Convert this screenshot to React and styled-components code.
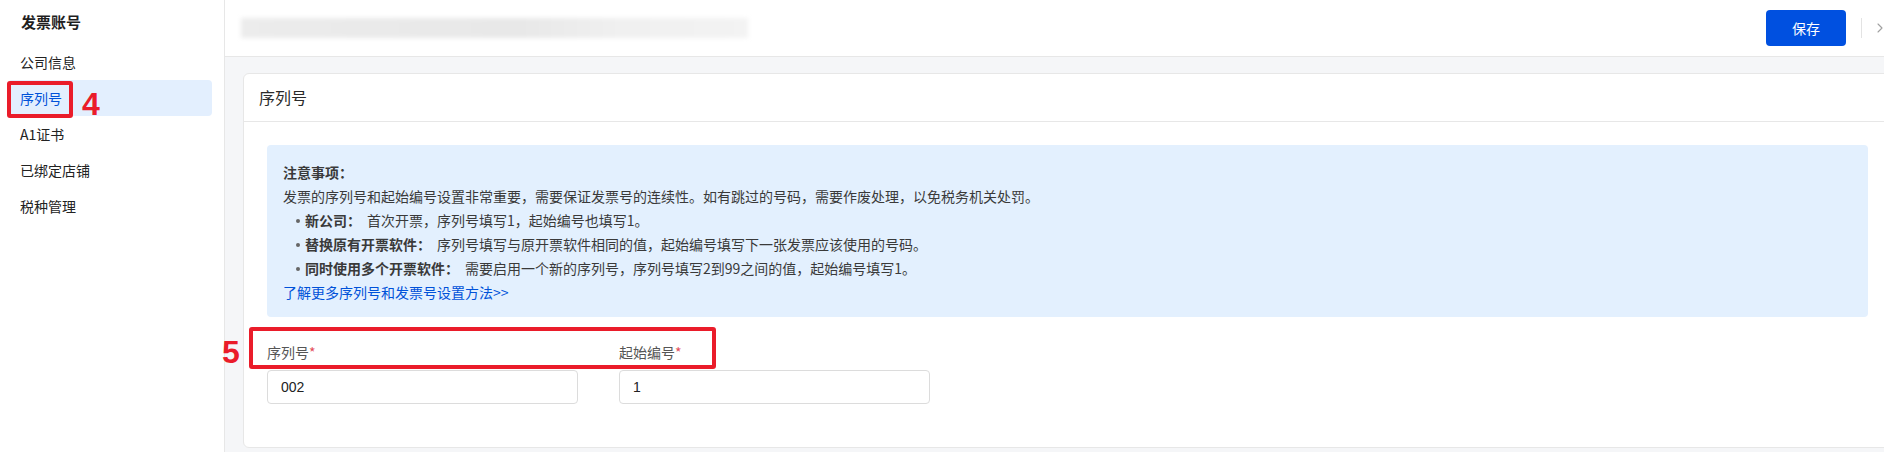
import styled, { createGlobalStyle } from 'styled-components'
import { ChevronRight } from 'lucide-react'

const GlobalStyle = createGlobalStyle`
  html, body {
    margin: 0;
    padding: 0;
    overflow: hidden;
    background: #ffffff;
  }
  body {
    font-family: "Noto Sans CJK SC", "Microsoft YaHei", sans-serif;
    color: #333;
  }
  * { box-sizing: border-box; }
`

const menuItems = ['公司信息', '序列号', 'A1证书', '已绑定店铺', '税种管理']

const tips = [
  { title: '新公司：', text: '首次开票，序列号填写1，起始编号也填写1。' },
  { title: '替换原有开票软件：', text: '序列号填写与原开票软件相同的值，起始编号填写下一张发票应该使用的号码。' },
  { title: '同时使用多个开票软件：', text: '需要启用一个新的序列号，序列号填写2到99之间的值，起始编号填写1。' },
]

function App() {
  return (
    <Page>
      <GlobalStyle />
      <Sidebar>
        <SideTitle>发票账号</SideTitle>
        <Menu>
          {menuItems.map((item) => (
            <MenuItem key={item} active={item === '序列号'}>{item}</MenuItem>
          ))}
        </Menu>
      </Sidebar>

      <Main>
        <TopBar>
          <BlurredTitle />
          <SaveButton>保存</SaveButton>
          <Divider />
          <ChevronRight size={16} color="#a0a0a0" strokeWidth={1.6} />
        </TopBar>

        <Content>
          <Card>
            <CardHeader>序列号</CardHeader>
            <CardBody>
              <Notice>
                <NoticeTitle>注意事项：</NoticeTitle>
                <div>发票的序列号和起始编号设置非常重要，需要保证发票号的连续性。如有跳过的号码，需要作废处理，以免税务机关处罚。</div>
                <TipList>
                  {tips.map((tip) => (
                    <Tip key={tip.title}>
                      <strong>{tip.title}</strong>
                      <span>{tip.text}</span>
                    </Tip>
                  ))}
                </TipList>
                <MoreLink href="#">了解更多序列号和发票号设置方法&gt;&gt;</MoreLink>
              </Notice>

              <FormRow>
                <Field>
                  <Label>序列号<Star>*</Star></Label>
                  <Input defaultValue="002" />
                </Field>
                <Field>
                  <Label>起始编号<Star>*</Star></Label>
                  <Input defaultValue="1" />
                </Field>
              </FormRow>
            </CardBody>
          </Card>
        </Content>
      </Main>

      {/* red annotation marks drawn over the screenshot */}
      <MarkBox style={{ left: 7, top: 81, width: 66, height: 37 }} />
      <MarkNumber style={{ left: 82, top: 88 }}>4</MarkNumber>
      <MarkBox style={{ left: 249, top: 327, width: 467, height: 42 }} />
      <MarkNumber style={{ left: 222, top: 336 }}>5</MarkNumber>
    </Page>
  )
}
export default App

const Page = styled.div`
  position: relative;
  display: flex;
  width: 1908px;
  height: 452px;
`

const Sidebar = styled.aside`
  width: 225px;
  flex-shrink: 0;
  border-right: 1px solid #e7e7e7;
  background: #fff;
  padding: 10px 12px 0 8px;
`

const SideTitle = styled.div`
  font-size: 15px;
  font-weight: bold;
  line-height: 24px;
  color: #1f1f1f;
  padding-left: 13px;
`

const Menu = styled.ul`
  list-style: none;
  margin: 10px 0 0;
  padding: 0;
`

const MenuItem = styled.li`
  height: 36px;
  line-height: 36px;
  padding-left: 12px;
  font-size: 14px;
  border-radius: 4px;
  color: ${(props) => (props.active ? '#0052d9' : '#222')};
  background: ${(props) => (props.active ? '#e3effe' : 'transparent')};
`

const Main = styled.main`
  flex: 1;
  display: flex;
  flex-direction: column;
  background: #f5f6f8;
`

const TopBar = styled.header`
  height: 57px;
  display: flex;
  align-items: center;
  padding: 0 20px 0 16px;
  background: #fff;
  border-bottom: 1px solid #e7e7e7;
`

const BlurredTitle = styled.div`
  width: 507px;
  height: 20px;
  margin-top: -1px;
  background: linear-gradient(90deg, #ececec 0%, #e8e8e8 55%, #f0f0f0 75%, #f3f3f3 100%);
  filter: blur(2px);
`

const SaveButton = styled.button`
  margin-left: auto;
  width: 80px;
  height: 36px;
  border: none;
  border-radius: 4px;
  background: #0050e0;
  color: #fff;
  font-family: inherit;
  font-size: 14px;
  cursor: pointer;
`

const Divider = styled.span`
  width: 1px;
  height: 20px;
  background: #e3e3e3;
  margin: 0 10px 0 15px;
`

const Content = styled.section`
  flex: 1;
  padding: 16px 16px 0 18px;
`

const Card = styled.div`
  background: #fff;
  border: 1px solid #e7e7e7;
  border-radius: 6px;
`

const CardHeader = styled.div`
  height: 48px;
  line-height: 47px;
  padding-left: 15px;
  font-size: 16px;
  color: #2a2a2a;
  border-bottom: 1px solid #e7e7e7;
`

const CardBody = styled.div`
  padding: 23px 23px 43px 23px;
`

const Notice = styled.div`
  background: #e3f0fe;
  border-radius: 4px;
  padding: 15px 16px 13px;
  font-size: 14px;
  line-height: 24px;
  color: #3a3a3a;
`

const NoticeTitle = styled.div`
  font-weight: bold;
`

const TipList = styled.ul`
  margin: 0;
  padding: 0 0 0 22px;
  list-style: none;
`

const Tip = styled.li`
  position: relative;

  &::before {
    content: '';
    position: absolute;
    left: -9px;
    top: 11px;
    width: 4px;
    height: 4px;
    border-radius: 50%;
    background: #666;
  }

  strong {
    margin-right: 6px;
  }
`

const MoreLink = styled.a`
  color: #0052d9;
  text-decoration: none;
`

const FormRow = styled.div`
  display: flex;
  gap: 41px;
  margin-top: 24px;
`

const Field = styled.div`
  display: flex;
  flex-direction: column;
  width: 311px;
`

const Label = styled.label`
  font-size: 14px;
  line-height: 22px;
  color: #555;
  margin-bottom: 7px;
`

const Star = styled.span`
  color: #e34d59;
`

const Input = styled.input`
  height: 34px;
  border: 1px solid #dcdcdc;
  border-radius: 4px;
  padding: 0 13px;
  font-family: "Liberation Sans", "Noto Sans CJK SC", sans-serif;
  font-size: 14px;
  color: #222;
  outline: none;
`

const MarkBox = styled.div`
  position: absolute;
  border: 4px solid #ea1c2a;
  border-radius: 3px;
  pointer-events: none;
`

const MarkNumber = styled.span`
  position: absolute;
  font-family: "Liberation Sans", Arial, sans-serif;
  font-weight: bold;
  font-size: 32px;
  line-height: 32px;
  color: #ea1c2a;
`
